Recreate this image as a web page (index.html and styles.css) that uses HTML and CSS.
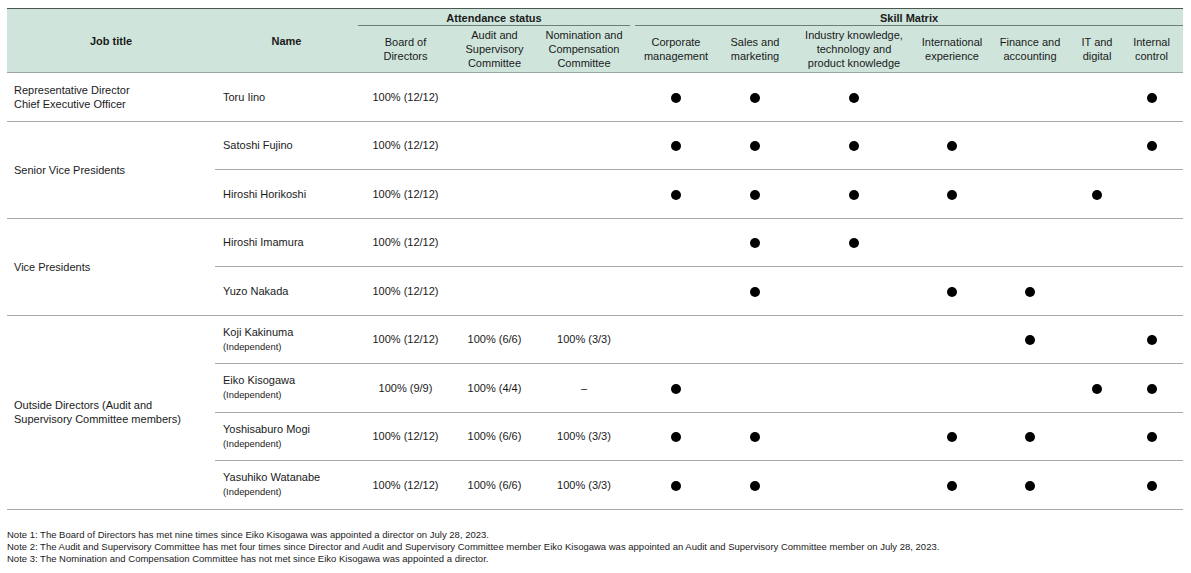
FILE: index.html
```html
<!DOCTYPE html>
<html lang="en">
<head>
<meta charset="utf-8">
<title>Skill Matrix</title>
<link rel="stylesheet" href="styles.css">
</head>
<body>
<div class="page">
<table class="matrix">
  <colgroup>
    <col class="c-job"><col class="c-name"><col class="c-board"><col class="c-audit"><col class="c-nom">
    <col class="c-corp"><col class="c-sales"><col class="c-ind"><col class="c-intl"><col class="c-fin"><col class="c-it"><col class="c-ctrl">
  </colgroup>
  <thead>
    <tr class="h-group">
      <th rowspan="2" class="h-main">Job title</th>
      <th rowspan="2" class="h-main">Name</th>
      <th colspan="3" class="h-grp"><div class="grp grp-att">Attendance status</div></th>
      <th colspan="7" class="h-grp"><div class="grp grp-skill">Skill Matrix</div></th>
    </tr>
    <tr class="h-sub">
      <th>Board of<br>Directors</th>
      <th>Audit and<br>Supervisory<br>Committee</th>
      <th>Nomination and<br>Compensation<br>Committee</th>
      <th>Corporate<br>management</th>
      <th>Sales and<br>marketing</th>
      <th>Industry knowledge,<br>technology and<br>product knowledge</th>
      <th>International<br>experience</th>
      <th>Finance and<br>accounting</th>
      <th>IT and<br>digital</th>
      <th>Internal<br>control</th>
    </tr>
  </thead>
  <tbody>
    <tr class="grp-end">
      <td class="job">Representative Director<br>Chief Executive Officer</td>
      <td class="name">Toru Iino</td>
      <td>100% (12/12)</td><td></td><td></td>
      <td><span class="dot"></span></td><td><span class="dot"></span></td><td><span class="dot"></span></td><td></td><td></td><td></td><td><span class="dot"></span></td>
    </tr>
    <tr>
      <td class="job" rowspan="2">Senior Vice Presidents</td>
      <td class="name">Satoshi Fujino</td>
      <td>100% (12/12)</td><td></td><td></td>
      <td><span class="dot"></span></td><td><span class="dot"></span></td><td><span class="dot"></span></td><td><span class="dot"></span></td><td></td><td></td><td><span class="dot"></span></td>
    </tr>
    <tr class="grp-end">
      <td class="name">Hiroshi Horikoshi</td>
      <td>100% (12/12)</td><td></td><td></td>
      <td><span class="dot"></span></td><td><span class="dot"></span></td><td><span class="dot"></span></td><td><span class="dot"></span></td><td></td><td><span class="dot"></span></td><td></td>
    </tr>
    <tr>
      <td class="job" rowspan="2">Vice Presidents</td>
      <td class="name">Hiroshi Imamura</td>
      <td>100% (12/12)</td><td></td><td></td>
      <td></td><td><span class="dot"></span></td><td><span class="dot"></span></td><td></td><td></td><td></td><td></td>
    </tr>
    <tr class="grp-end">
      <td class="name">Yuzo Nakada</td>
      <td>100% (12/12)</td><td></td><td></td>
      <td></td><td><span class="dot"></span></td><td></td><td><span class="dot"></span></td><td><span class="dot"></span></td><td></td><td></td>
    </tr>
    <tr>
      <td class="job" rowspan="4">Outside Directors (Audit and<br>Supervisory Committee members)</td>
      <td class="name">Koji Kakinuma<span class="ind">(Independent)</span></td>
      <td>100% (12/12)</td><td>100% (6/6)</td><td>100% (3/3)</td>
      <td></td><td></td><td></td><td></td><td><span class="dot"></span></td><td></td><td><span class="dot"></span></td>
    </tr>
    <tr>
      <td class="name">Eiko Kisogawa<span class="ind">(Independent)</span></td>
      <td>100% (9/9)</td><td>100% (4/4)</td><td>–</td>
      <td><span class="dot"></span></td><td></td><td></td><td></td><td></td><td><span class="dot"></span></td><td><span class="dot"></span></td>
    </tr>
    <tr>
      <td class="name">Yoshisaburo Mogi<span class="ind">(Independent)</span></td>
      <td>100% (12/12)</td><td>100% (6/6)</td><td>100% (3/3)</td>
      <td><span class="dot"></span></td><td><span class="dot"></span></td><td></td><td><span class="dot"></span></td><td><span class="dot"></span></td><td></td><td><span class="dot"></span></td>
    </tr>
    <tr class="grp-end">
      <td class="name">Yasuhiko Watanabe<span class="ind">(Independent)</span></td>
      <td>100% (12/12)</td><td>100% (6/6)</td><td>100% (3/3)</td>
      <td><span class="dot"></span></td><td><span class="dot"></span></td><td></td><td><span class="dot"></span></td><td><span class="dot"></span></td><td></td><td><span class="dot"></span></td>
    </tr>
  </tbody>
</table>
<div class="notes">
  <p>Note 1: The Board of Directors has met nine times since Eiko Kisogawa was appointed a director on July 28, 2023.</p>
  <p>Note 2: The Audit and Supervisory Committee has met four times since Director and Audit and Supervisory Committee member Eiko Kisogawa was appointed an Audit and Supervisory Committee member on July 28, 2023.</p>
  <p>Note 3: The Nomination and Compensation Committee has not met since Eiko Kisogawa was appointed a director.</p>
</div>
</div>
</body>
</html>
```
FILE: styles.css
```css
html, body {
  margin: 0;
  padding: 0;
  background: #ffffff;
}
body {
  font-family: "Liberation Sans", Arial, sans-serif;
  color: #1a1a1a;
}
.page {
  padding: 8px 8px 0 7px;
}
.matrix {
  width: 1176px;
  table-layout: fixed;
  border-collapse: collapse;
  font-size: 11px;
  line-height: 14px;
}
.c-job { width: 208px; }
.c-name { width: 143px; }
.c-board { width: 95px; }
.c-audit { width: 83px; }
.c-nom { width: 96px; }
.c-corp { width: 88px; }
.c-sales { width: 70px; }
.c-ind { width: 128px; }
.c-intl { width: 68px; }
.c-fin { width: 88px; }
.c-it { width: 46px; }
.c-ctrl { width: 63px; }

.matrix thead {
  background: #cfe5dc;
}
.matrix thead tr.h-group th {
  border-top: 1px solid #4d5752;
}
.matrix th {
  font-weight: normal;
  text-align: center;
  vertical-align: middle;
  padding: 0;
}
.matrix th.h-main {
  font-weight: bold;
  border-bottom: 1px solid #9aa6a1;
}
.h-group th.h-grp {
  height: 14px;
  vertical-align: top;
  padding: 3px 0 0 0;
}
.grp {
  font-weight: bold;
  border-bottom: 1px solid #6f7d78;
  height: 13px;
  line-height: 13px;
}
.grp-att { margin-right: 2px; }
.grp-skill { margin-left: 3px; }
.h-sub th {
  height: 46px;
  border-bottom: 1px solid #9aa6a1;
  padding: 0;
}
.matrix td {
  text-align: center;
  vertical-align: middle;
  height: 47.5px;
  padding: 0;
  border-bottom: 1px solid #a9a9a9;
}
.matrix td.job {
  text-align: left;
  padding-left: 7px;
}
.matrix td.name {
  text-align: left;
  padding-left: 8px;
}
.ind {
  display: block;
  font-size: 9.4px;
  line-height: 14px;
  margin-top: 1px;
}
.dot {
  display: inline-block;
  width: 10px;
  height: 10px;
  border-radius: 50%;
  background: #000;
  vertical-align: middle;
}
.notes {
  margin-top: 19px;
  font-size: 9.5px;
  line-height: 12px;
  color: #1a1a1a;
}
.notes p {
  margin: 0;
}
```
